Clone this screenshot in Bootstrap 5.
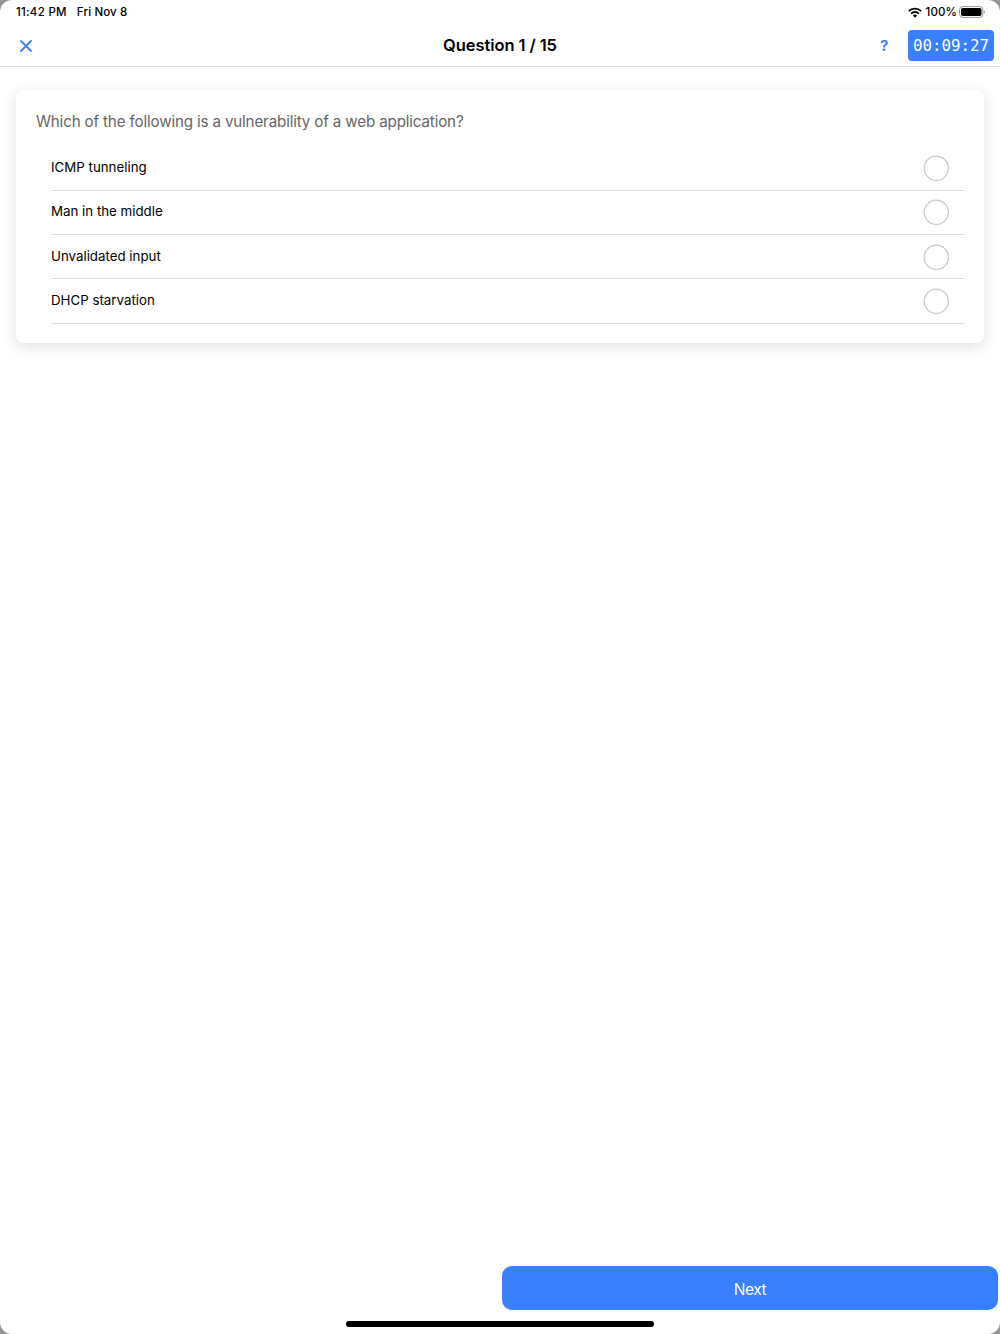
<!DOCTYPE html>
<html lang="en">
<head>
<meta charset="utf-8">
<meta name="viewport" content="width=device-width, initial-scale=1">
<title>Question 1 / 15</title>
<link href="https://cdn.jsdelivr.net/npm/bootstrap@5.3.0/dist/css/bootstrap.min.css" rel="stylesheet">
<style>
  html { background: #959595; }
  body { font-family: Inter, "Liberation Sans", sans-serif; background: #959595; color: #000; }
  .screen { height: 1334px; border-radius: 12px; overflow: hidden; }
  .status-bar { height: 24px; padding: 0 15px 0 16px; font-size: 11.5px; font-weight: 500; line-height: 24px; }
  .status-time { letter-spacing: .28px; }
  .status-date { margin-left: 10px; letter-spacing: .12px; }
  .status-pct { margin-right: 2px; letter-spacing: .1px; }
  .quiz-bar { height: 43px; border-bottom: 1px solid #dedede; padding: 0 6px; }
  .quiz-title { font-size: 16.5px; font-weight: 600; line-height: 40px; padding-bottom: 2px; letter-spacing: -.08px; }
  .blue { color: #3880ff; }
  .close-icon { margin: 1px 0 0 14px; }
  .help-btn { font-size: 15px; font-weight: 700; margin-right: 19.5px; line-height: 42px; padding-top: 1px; }
  .timer { width: 86px; height: 31px; border-radius: 4px; background: #3880ff; color: #fff; font: 15.8px/31px "DejaVu Sans Mono", monospace; }
  .quiz-card { margin: 23px 16px 0; height: 253px; border-radius: 8px; box-shadow: 0 4px 16px rgba(0,0,0,.12); padding: 20px 19px 0 20px; }
  .question-text { font-size: 15.2px; line-height: 23px; color: #666; margin: 0; letter-spacing: -.165px; }
  .answers { margin: 13.3px 0 0 15px; }
  .answer { height: 44.4px; border-bottom: 1px solid #dedede; padding-right: 15.6px; font-size: 13.3px; }
  .answer-radio { width: 26px; height: 26px; }
  .next-btn { width: 496px; height: 44px; margin: 0 2px 0 auto; border: 0; border-radius: 10px; background: #3880ff; color: #fff; font-size: 15.5px; letter-spacing: -.4px; padding: 2px 0 0; }
  .home-pill { width: 308px; height: 5.5px; border-radius: 3px; background: #000; margin: 10.8px auto 7.4px; }
</style>
</head>
<body>
<div class="screen bg-white d-flex flex-column">
  <div class="status-bar d-flex align-items-center flex-shrink-0">
    <span class="status-time">11:42 PM</span>
    <span class="status-date">Fri Nov 8</span>
    <svg class="ms-auto" width="14" height="11" viewBox="0 0 14 11" aria-hidden="true">
      <g fill="none" stroke="#000" stroke-width="1.8"><path d="M.8 4.2a8.8 8.8 0 0 1 12.4 0"/><path d="M3.1 6.6a5.5 5.5 0 0 1 7.8 0"/></g>
      <path d="M7 10.7 4.9 8.5a3 3 0 0 1 4.2 0z"/>
    </svg>
    <span class="status-pct ms-1">100%</span>
    <svg width="26" height="12" viewBox="0 0 26 12" aria-hidden="true">
      <rect x=".6" y=".6" width="23.3" height="10.8" rx="3" fill="none" stroke="#999"/>
      <rect x="2" y="2" width="20.5" height="8" rx="1.8"/>
      <path d="M24.9 4.2c1.3.5 1.3 3.1 0 3.6z" fill="#999"/>
    </svg>
  </div>
  <header class="quiz-bar row g-0 flex-shrink-0 align-items-center">
    <div class="col d-flex">
      <svg class="close-icon" width="12" height="12" viewBox="0 0 12 12" stroke="#3880ff" stroke-width="1.8" stroke-linecap="round" role="img" aria-label="Close"><path d="m1 1 10 10M11 1 1 11"/></svg>
    </div>
    <div class="col-auto quiz-title text-nowrap">Question 1 / 15</div>
    <div class="col d-flex justify-content-end align-items-center">
      <span class="help-btn blue">?</span>
      <div class="timer text-center">00:09:27</div>
    </div>
  </header>
  <main class="quiz-card bg-white flex-shrink-0">
    <p class="question-text">Which of the following is a vulnerability of a web application?</p>
    <div class="answers">
      <label class="answer d-flex align-items-center justify-content-between"><span>ICMP tunneling</span><svg class="answer-radio" viewBox="0 0 26 26"><circle cx="13.3" cy="13.3" r="12.1" fill="none" stroke="#c8c8c8" stroke-width="1.2"/></svg></label>
      <label class="answer d-flex align-items-center justify-content-between"><span>Man in the middle</span><svg class="answer-radio" viewBox="0 0 26 26"><circle cx="13.3" cy="13.3" r="12.1" fill="none" stroke="#c8c8c8" stroke-width="1.2"/></svg></label>
      <label class="answer d-flex align-items-center justify-content-between"><span>Unvalidated input</span><svg class="answer-radio" viewBox="0 0 26 26"><circle cx="13.3" cy="13.3" r="12.1" fill="none" stroke="#c8c8c8" stroke-width="1.2"/></svg></label>
      <label class="answer d-flex align-items-center justify-content-between"><span>DHCP starvation</span><svg class="answer-radio" viewBox="0 0 26 26"><circle cx="13.3" cy="13.3" r="12.1" fill="none" stroke="#c8c8c8" stroke-width="1.2"/></svg></label>
    </div>
  </main>
  <footer class="mt-auto">
    <button class="next-btn btn d-block" type="button">Next</button>
    <div class="home-pill"></div>
  </footer>
</div>
<script src="https://cdn.jsdelivr.net/npm/bootstrap@5.3.0/dist/js/bootstrap.bundle.min.js"></script>
</body>
</html>
